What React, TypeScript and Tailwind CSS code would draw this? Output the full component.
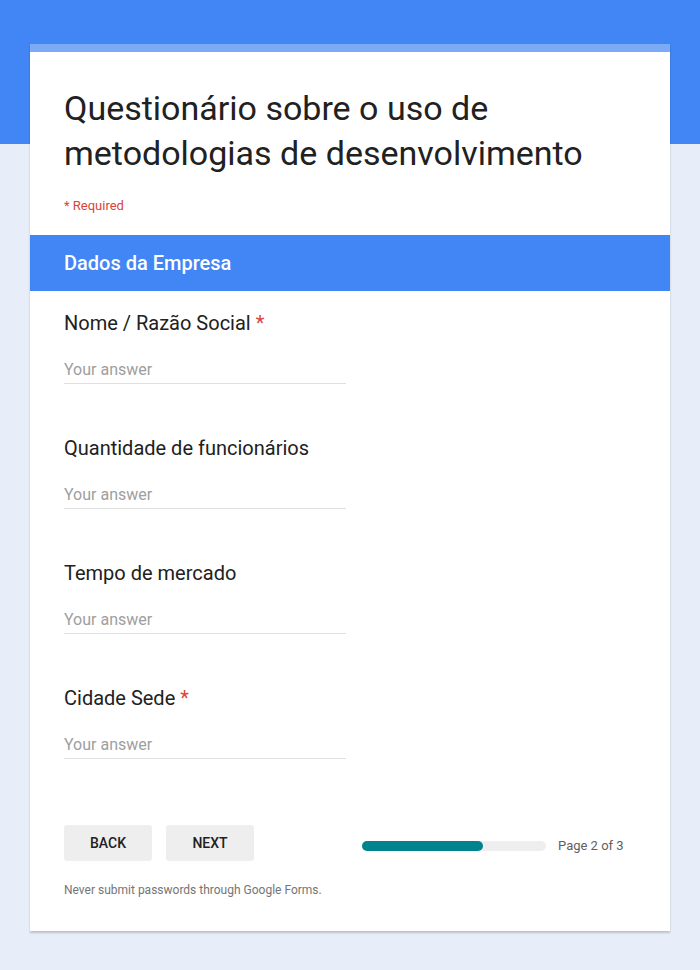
const questions = [
  { label: "Nome / Razão Social", required: true },
  { label: "Quantidade de funcionários", required: false },
  { label: "Tempo de mercado", required: false },
  { label: "Cidade Sede", required: true },
];

export default function App() {
  return (
    <div
      className="min-h-[970px] bg-[#e8eef9] relative"
      style={{ fontFamily: "Roboto, Arial, sans-serif" }}
    >
      <div className="h-[144px] bg-[#4285f4]" />
      <div className="-mt-[100px] mx-[30px] bg-white shadow-[0_2px_2px_rgba(0,0,0,0.2)] relative">
        <div className="h-[8px] bg-[#7baaf7]" />

        {/* Header */}
        <div className="px-[34px] pt-[34px] pb-[21px]">
          <h1 className="text-[34px] leading-[45px] text-[#212121] font-normal">
            Questionário sobre o uso de metodologias de desenvolvimento
          </h1>
          <div className="mt-[22px] text-[13px] leading-[16px] text-[#db4437]">* Required</div>
        </div>

        {/* Section */}
        <div className="h-[56px] bg-[#4285f4] px-[34px] flex items-center">
          <span className="text-white text-[20px] font-medium">Dados da Empresa</span>
        </div>

        <div className="px-[34px] pt-[20px]">
          {questions.map((q) => (
            <div key={q.label} className="h-[125px]">
              <div className="text-[20px] leading-[24px] text-[#212121]">
                {q.label}
                {q.required && <span className="text-[#db4437]"> *</span>}
              </div>
              <div className="mt-[25px] w-[282px] border-b border-[#e0e0e0] pb-[3px] text-[16px] leading-[20px] text-[#9e9e9e]">
                Your answer
              </div>
            </div>
          ))}
        </div>

        {/* Navigation */}
        <div className="px-[34px] mt-[14px] flex items-center">
          <button className="w-[88px] h-[36px] bg-[#eeeeee] rounded-[3px] text-[14px] font-medium text-[#212121]">
            BACK
          </button>
          <button className="ml-[14px] w-[88px] h-[36px] bg-[#eeeeee] rounded-[3px] text-[14px] font-medium text-[#212121]">
            NEXT
          </button>
          <div className="ml-[108px] mt-[6px] flex items-center">
            <div className="w-[184px] h-[10px] rounded-full bg-[#eeeeee]">
              <div className="w-[121px] h-[10px] rounded-full bg-[#00838f]" />
            </div>
            <span className="ml-[12px] text-[13px] text-[#616161]">Page 2 of 3</span>
          </div>
        </div>

        <div className="px-[34px] pt-[21px] pb-[33px] text-[12px] leading-[16px] text-[#757575]">
          Never submit passwords through Google Forms.
        </div>
      </div>
    </div>
  );
}
